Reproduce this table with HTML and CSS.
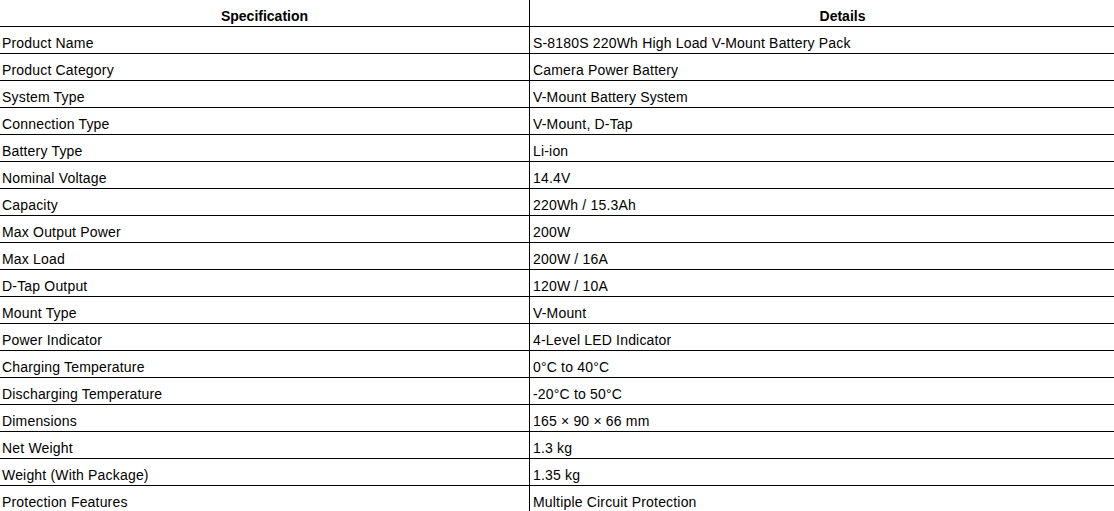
FILE: index.html
```html
<!DOCTYPE html>
<html>
<head>
<meta charset="utf-8">
<link rel="stylesheet" href="styles.css">
</head>
<body>
<table class="spec">
  <thead>
    <tr><th>Specification</th><th>Details</th></tr>
  </thead>
  <tbody>
    <tr><td>Product Name</td><td>S-8180S 220Wh High Load V-Mount Battery Pack</td></tr>
    <tr><td>Product Category</td><td>Camera Power Battery</td></tr>
    <tr><td>System Type</td><td>V-Mount Battery System</td></tr>
    <tr><td>Connection Type</td><td>V-Mount, D-Tap</td></tr>
    <tr><td>Battery Type</td><td>Li-ion</td></tr>
    <tr><td>Nominal Voltage</td><td>14.4V</td></tr>
    <tr><td>Capacity</td><td>220Wh / 15.3Ah</td></tr>
    <tr><td>Max Output Power</td><td>200W</td></tr>
    <tr><td>Max Load</td><td>200W / 16A</td></tr>
    <tr><td>D-Tap Output</td><td>120W / 10A</td></tr>
    <tr><td>Mount Type</td><td>V-Mount</td></tr>
    <tr><td>Power Indicator</td><td>4-Level LED Indicator</td></tr>
    <tr><td>Charging Temperature</td><td>0°C to 40°C</td></tr>
    <tr><td>Discharging Temperature</td><td>-20°C to 50°C</td></tr>
    <tr><td>Dimensions</td><td>165 × 90 × 66 mm</td></tr>
    <tr><td>Net Weight</td><td>1.3 kg</td></tr>
    <tr><td>Weight (With Package)</td><td>1.35 kg</td></tr>
    <tr><td>Protection Features</td><td>Multiple Circuit Protection</td></tr>
  </tbody>
</table>
</body>
</html>
```

FILE: styles.css
```css
html, body {
  margin: 0;
  padding: 0;
  overflow: hidden;
  background: #fff;
}
.spec {
  border-collapse: collapse;
  table-layout: fixed;
  width: 1155px;
  font-family: "Liberation Sans", Arial, sans-serif;
  font-size: 14px;
  line-height: 16px;
  color: #000;
}
.spec th,
.spec td {
  height: 16px;
  padding: 8px 2px 2px;
  border-bottom: 1px solid #000;
  text-align: left;
  vertical-align: top;
  white-space: nowrap;
}
.spec td {
  letter-spacing: 0.18px;
}
.spec th {
  text-align: center;
  font-weight: bold;
}
.spec th:first-child,
.spec td:first-child {
  width: 525px;
}
.spec th + th,
.spec td + td {
  border-left: 1px solid #000;
}
.spec td + td {
  padding-left: 3px;
}
```
